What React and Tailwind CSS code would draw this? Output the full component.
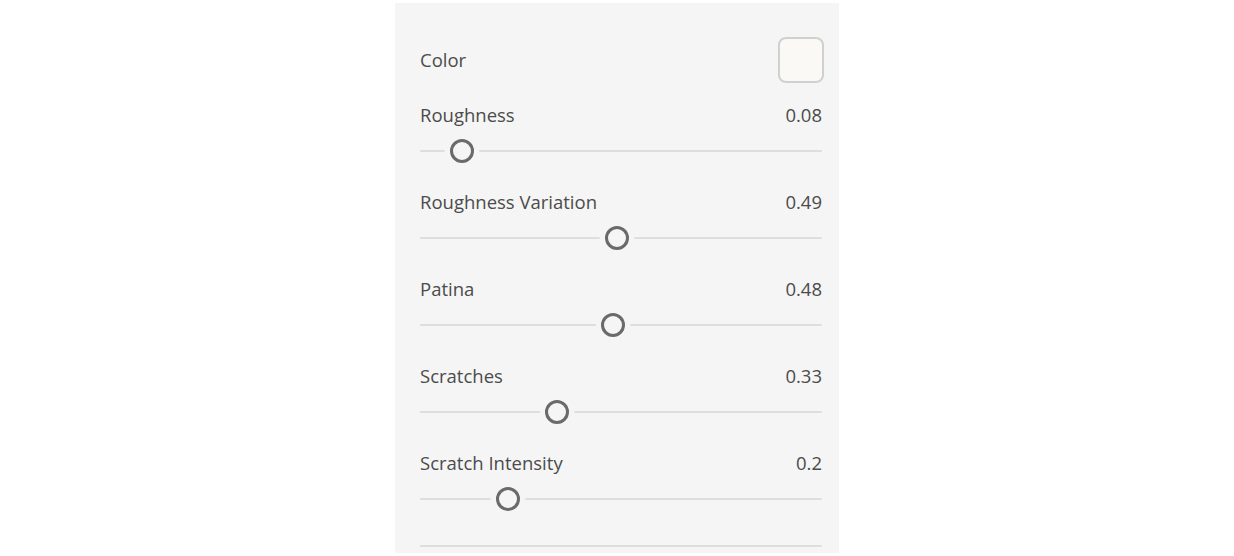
import React from "react";

const sliders = [
  { label: "Roughness", value: 0.08, display: "0.08" },
  { label: "Roughness Variation", value: 0.49, display: "0.49" },
  { label: "Patina", value: 0.48, display: "0.48" },
  { label: "Scratches", value: 0.33, display: "0.33" },
  { label: "Scratch Intensity", value: 0.2, display: "0.2" },
];

const TRACK_W = 402;
const THUMB = 24;
const GAP = 5;

// Slider: track split around the handle, like Spectrum
const Slider = ({ value }) => {
  const center = THUMB / 2 + value * (TRACK_W - THUMB);
  const leftEnd = center - THUMB / 2 - GAP;
  const rightStart = center + THUMB / 2 + GAP;
  return (
    <div className="relative h-6 w-full">
      <div
        className="absolute top-[11px] left-0 h-[2px] rounded-full bg-[#dedede]"
        style={{ width: Math.max(0, leftEnd) }}
      />
      <div
        className="absolute top-[11px] right-0 h-[2px] rounded-full bg-[#dedede]"
        style={{ left: rightStart }}
      />
      <div
        className="absolute top-0 h-6 w-6 rounded-full border-[3px] border-[#6a6a6a] bg-[#f5f5f5]"
        style={{ left: center - THUMB / 2 }}
      />
    </div>
  );
};

export default function App() {
  return (
    <div
      className="min-h-screen bg-white flex justify-center pt-[3px]"
      style={{ fontFamily: '"Open Sans", "Noto Sans", sans-serif' }}
    >
      <div className="w-[444px] h-[550px] bg-[#f5f5f5] pl-[25px] pr-[17px] pt-[34px] overflow-hidden">
        {/* Color */}
        <div className="flex items-center justify-between h-[46px]">
          <span className="text-[18.5px] text-[#4b4b4b]">Color</span>
          <div className="h-[46px] w-[46px] -mr-[2px] rounded-lg border-2 border-[#d0d0d0] bg-[#faf9f5]" />
        </div>

        <div className="mt-5 flex flex-col gap-[27px]">
          {sliders.map((s) => (
            <div key={s.label} className="flex flex-col gap-3">
              <div className="flex items-center justify-between h-6 text-[18.5px] text-[#4b4b4b]">
                <span>{s.label}</span>
                <span>{s.display}</span>
              </div>
              <Slider value={s.value} />
            </div>
          ))}
        </div>

        <div className="mt-[34px] h-[2px] w-full rounded-full bg-[#dedede]" />
      </div>
    </div>
  );
}
